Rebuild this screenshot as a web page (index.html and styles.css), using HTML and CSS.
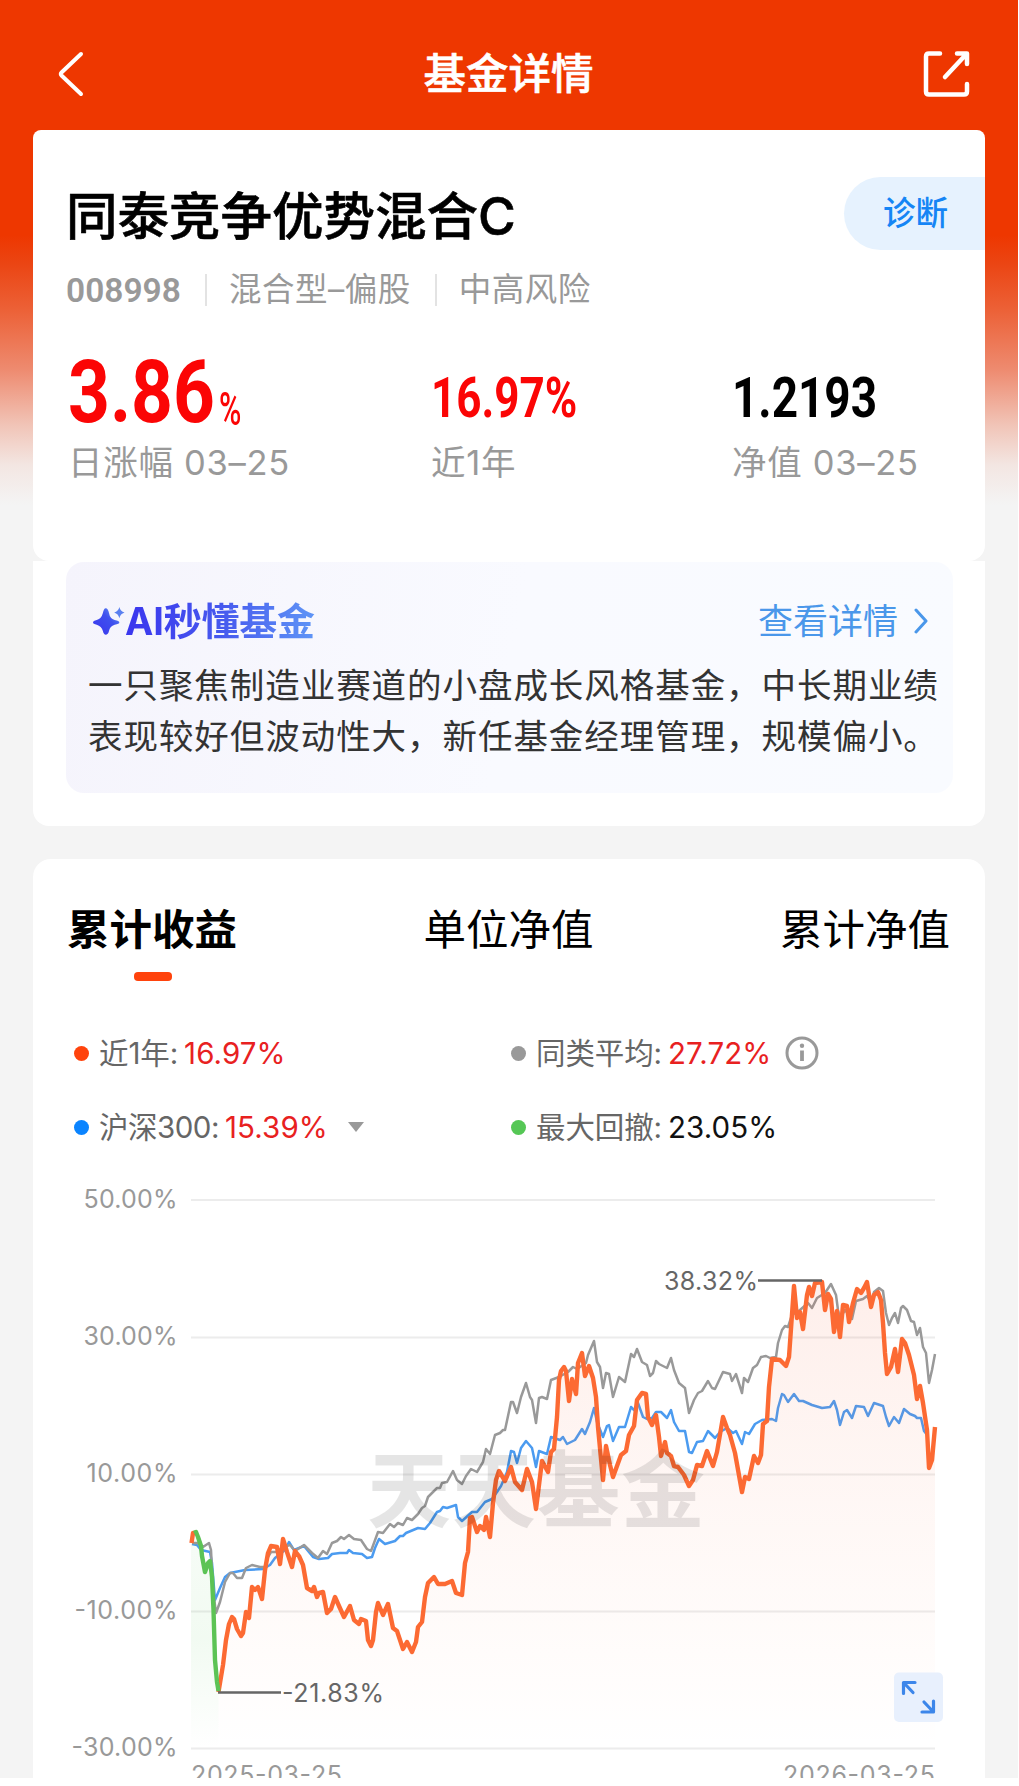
FILE: index.html
```
<!DOCTYPE html>
<html lang="zh-CN">
<head>
    <meta charset="UTF-8">
    <meta name="viewport" content="width=device-width, initial-scale=1.0">
    <title>基金详情</title>
    <link rel="stylesheet" href="styles.css">
</head>
<body>
<div class="page">
    <header class="header">
        <svg class="icon-back" viewBox="0 0 30 48" fill="none" stroke="#fff" stroke-width="4" stroke-linecap="round" stroke-linejoin="round">
            <path d="M25 4 5.500 22.500Q4 24 5.500 25.500L25 44"/>
        </svg>
        <h1>基金详情</h1>
        <svg class="icon-share" viewBox="0 0 48 48" fill="none" stroke="#fff" stroke-width="4.500" stroke-linecap="round" stroke-linejoin="round">
            <path d="M17 3.500H6Q3 3.500 3 6.500V41.500Q3 44.500 6 44.500H41Q44 44.500 44 41.500V34M34 3.500H44V14M43 4.500 22 27"/>
        </svg>
    </header>

    <section class="card fund">
        <div class="fund-head">
            <h2>同泰竞争优势混合C</h2>
            <a class="diagnose">诊断</a>
        </div>
        <div class="fund-meta">
            <b>008998</b>
            <span>混合型–偏股</span>
            <span>中高风险</span>
        </div>
        <div class="stats">
            <div class="stat">
                <div class="num num-big red"><span class="digits">3.86</span><span class="pct">%</span></div>
                <div class="stat-label">日涨幅 03–25</div>
            </div>
            <div class="stat">
                <div class="num red"><span class="digits">16.97%</span></div>
                <div class="stat-label">近1年</div>
            </div>
            <div class="stat">
                <div class="num num-nav"><span class="digits">1.2193</span></div>
                <div class="stat-label">净值 03–25</div>
            </div>
        </div>
    </section>

    <section class="card ai">
        <div class="ai-box">
            <div class="ai-head">
                <svg class="icon-star" viewBox="0 0 34 34">
                    <defs>
                        <linearGradient id="star" x1="0" y1="1" x2="1" y2="0">
                            <stop offset="0" stop-color="#3a35ee"/>
                            <stop offset="0.600" stop-color="#3f50ee"/>
                            <stop offset="1" stop-color="#6aa2f5"/>
                        </linearGradient>
                    </defs>
                    <path fill="url(#star)" d="M13.500 3Q16 3 17 8Q18 14 23 15.500Q28 16.500 28 18Q28 19.500 23 20.500Q18 22 17 27Q16 31 13.500 31Q11.500 31 10.500 27Q9 22 4 20.500Q0 19.500 0 18Q0 16.500 4 15.500Q9 14 10.500 8Q11.500 3 13.500 3Z"/>
                    <path fill="#5a80f0" d="M28 1.500Q29 6 33.500 7.500Q29 9 28 13.500Q27 9 22.500 7.500Q27 6 28 1.500Z"/>
                </svg>
                <h3>AI秒懂基金</h3>
                <a class="more">查看详情
                    <svg class="icon-more" viewBox="0 0 16 26" fill="none" stroke="#4a97ea" stroke-width="3" stroke-linecap="round" stroke-linejoin="round"><path d="M3 2 13 13 3 24"/></svg>
                </a>
            </div>
            <p>一只聚焦制造业赛道的小盘成长风格基金，中长期业绩<br>表现较好但波动性大，新任基金经理管理，规模偏小。</p>
        </div>
    </section>

    <section class="card trend">
        <nav class="tabs">
            <a class="tab active">累计收益</a>
            <a class="tab">单位净值</a>
            <a class="tab">累计净值</a>
        </nav>
        <div class="legend">
            <div class="legend-item"><i class="dot orange"></i><span>近1年:</span><em>16.97%</em></div>
            <div class="legend-item"><i class="dot gray"></i><span>同类平均:</span><em>27.72%</em>
                <svg class="icon-info" viewBox="0 0 34 34" fill="none" stroke="#999"><circle cx="17" cy="17" r="15" stroke-width="3"/><path d="M17 14.500V25" stroke-width="3.800"/><circle cx="17" cy="9.800" r="2.200" fill="#999" stroke="none"/></svg>
            </div>
            <div class="legend-item"><i class="dot blue"></i><span class="index-name">沪深300:</span><em>15.39%</em><i class="caret"></i></div>
            <div class="legend-item"><i class="dot green"></i><span>最大回撤:</span><em class="black">23.05%</em></div>
        </div>

        <svg class="chart" viewBox="33 1178 952 600">
            <defs>
                <linearGradient id="fillOrange" gradientUnits="userSpaceOnUse" x1="0" y1="1280" x2="0" y2="1748">
                    <stop offset="0" stop-color="#f25a30" stop-opacity="0.100"/>
                    <stop offset="0.500" stop-color="#f96a40" stop-opacity="0.050"/>
                    <stop offset="1" stop-color="#ff6a33" stop-opacity="0"/>
                </linearGradient>
                <linearGradient id="fillGreen" gradientUnits="userSpaceOnUse" x1="0" y1="1532" x2="0" y2="1748">
                    <stop offset="0" stop-color="#5bc65b" stop-opacity="0.050"/>
                    <stop offset="0.500" stop-color="#5bc65b" stop-opacity="0.080"/>
                    <stop offset="1" stop-color="#5bc65b" stop-opacity="0"/>
                </linearGradient>
            </defs>

            <!-- grid -->
            <path class="grid" d="M191 1200H935M191 1337.500H935M191 1474.500H935M191 1611.500H935M191 1748.500H935"/>
            <g class="axis" text-anchor="end">
                <text x="177.500" y="1207.500" textLength="94">50.00%</text>
                <text x="177.500" y="1344.500" textLength="94">30.00%</text>
                <text x="177.500" y="1481.500" textLength="91">10.00%</text>
                <text x="177.500" y="1618.500" textLength="103">-10.00%</text>
                <text x="177.500" y="1755.500" textLength="106">-30.00%</text>
            </g>
            <g class="axis">
                <text x="191" y="1783.500" textLength="151">2025-03-25</text>
                <text x="783" y="1783.500" textLength="152">2026-03-25</text>
            </g>

            <!-- 沪深300 -->
            <polyline class="line line-blue" points="192,1544 197,1545 201,1550 210,1552 212,1563 215,1600 220,1588 225,1577 230,1573 245,1570 263,1569 270,1565 275,1558 285,1550 289,1542 294,1550 304,1546 313,1557 319,1559 328,1558 332,1554 340,1553 347,1553 349,1550 353,1553 362,1554 367,1558 372,1557 375,1548 379,1539 385,1544 395,1541 400,1536 403,1536 406,1533 418,1528 425,1529 430,1523 437,1512 440,1511 443,1507 447,1508 456,1505 458,1517 462,1521 472,1512 477,1512 485,1502 492,1499 497,1492 501,1486 507,1472 511,1451 514,1452 517,1463 521,1448 526,1441 532,1448 536,1467 539,1451 547,1454 551,1437 560,1440 563,1437 567,1444 575,1440 582,1429 585,1434 590,1422 594,1408 597,1422 603,1437 607,1426 609,1425 613,1441 619,1427 625,1427 631,1407 634,1410 638,1403 643,1417 647,1419 652,1418 656,1412 661,1412 667,1418 671,1410 674,1422 679,1431 685,1431 689,1452 692,1453 697,1442 703,1441 708,1431 715,1438 720,1432 727,1428 733,1433 736,1431 742,1444 745,1432 749,1434 755,1424 762,1420 772,1419 776,1421 778,1408 782,1394 784,1395 788,1402 794,1394 799,1401 803,1401 812,1405 822,1408 830,1407 834,1401 837,1410 840,1425 844,1412 847,1410 852,1418 856,1406 864,1407 868,1416 874,1403 883,1406 886,1417 889,1426 894,1417 899,1423 904,1409 910,1414 915,1416 917,1418 921,1418 924,1431 928,1436"/>
            <!-- 同类平均 -->
            <polyline class="line line-gray" points="192,1543 198,1543 203,1547 209,1543 211,1550 213,1590 216,1613 220,1602 225,1582 230,1573 233,1573 237,1578 242,1578 246,1568 252,1565 260,1567 265,1567 268,1557 271,1552 277,1552 283,1547 290,1545 295,1551 304,1545 312,1553 318,1558 323,1551 327,1554 332,1543 337,1541 341,1537 344,1539 349,1535 354,1539 361,1540 367,1549 371,1551 374,1543 378,1532 383,1533 390,1524 394,1527 398,1523 403,1525 407,1518 412,1520 418,1514 422,1508 425,1506 428,1497 437,1488 440,1488 442,1483 447,1482 453,1471 457,1480 462,1484 466,1476 471,1469 477,1472 483,1462 486,1449 490,1454 495,1435 500,1433 503,1430 505,1430 511,1402 513,1402 517,1413 521,1397 526,1383 530,1397 532,1400 536,1423 539,1398 542,1397 547,1399 551,1380 559,1377 568,1372 573,1367 577,1369 586,1363 588,1355 594,1341 597,1362 600,1367 603,1388 606,1373 609,1374 613,1397 619,1377 625,1382 631,1354 634,1357 637,1349 642,1362 647,1365 650,1376 653,1373 656,1361 659,1364 667,1368 671,1358 674,1370 679,1383 685,1388 689,1413 694,1400 698,1393 702,1391 708,1381 712,1388 715,1389 723,1372 730,1374 732,1381 736,1374 742,1393 744,1378 748,1382 753,1368 757,1365 761,1357 766,1356 770,1358 776,1357 778,1343 782,1330 785,1326 788,1327 792,1315 800,1310 808,1303 812,1308 817,1298 825,1293 831,1284 836,1295 838,1310 840,1318 845,1310 852,1319 856,1301 863,1299 867,1296 871,1302 874,1292 879,1288 883,1291 886,1313 889,1325 892,1318 895,1313 898,1323 901,1308 903,1306 907,1310 911,1321 914,1322 917,1335 920,1328 923,1347 926,1353 929,1383 932,1370 935,1354"/>

            <!-- 本基金 -->
            <path fill="url(#fillGreen)" d="M191 1541 195 1532 201 1546 205 1572 210 1561 213.500 1610 215 1660 218.500 1691V1748H191Z"/>
            <polygon fill="url(#fillOrange)" points="218.500,1748 218.500,1692 223,1665 226,1640 229,1624 232,1617 234,1619 237,1629 241,1636 243,1633 246,1612 249,1618 252,1587 255,1590 258,1587 262,1599 265,1570 268,1553 271,1546 277,1547 280,1564 283,1539 287,1552 292,1567 295,1551 299,1556 303,1565 307,1588 312,1591 314,1587 317,1597 319,1593 323,1592 327,1613 331,1609 335,1597 339,1606 344,1617 350,1606 354,1620 359,1624 361,1619 366,1621 368,1640 371,1646 373,1640 376,1612 378,1603 383,1615 388,1604 393,1628 397,1631 403,1649 407,1642 412,1652 416,1642 418,1627 422,1622 425,1597 428,1583 434,1577 438,1584 445,1584 452,1581 456,1593 462,1595 465,1563 468,1552 470,1518 472,1517 477,1532 480,1526 484,1530 486,1517 490,1537 493,1503 496,1480 499,1471 505,1481 511,1467 515,1482 522,1490 527,1469 532,1482 536,1509 542,1461 548,1472 551,1452 554,1449 557,1417 559,1380 561,1371 564,1367 566,1371 569,1401 572,1379 576,1394 578,1363 582,1353 585,1376 589,1366 593,1378 596,1397 598,1427 603,1480 606,1446 610,1465 613,1477 621,1455 626,1451 629,1435 634,1426 637,1400 642,1393 646,1394 648,1417 652,1425 656,1415 659,1437 661,1456 665,1442 667,1453 671,1456 674,1466 678,1467 684,1475 689,1486 693,1480 697,1465 702,1466 707,1451 713,1466 717,1452 723,1417 727,1428 730,1435 735,1453 742,1492 745,1477 749,1479 754,1456 758,1463 761,1455 763,1424 767,1421 769,1387 772,1359 780,1360 786,1366 789,1357 794,1286 797,1318 800,1312 803,1329 807,1295 809,1287 812,1296 815,1283 822,1282 825,1310 828,1294 831,1299 834,1332 837,1311 840,1337 843,1305 847,1306 849,1322 853,1303 857,1289 861,1293 864,1288 867,1282 871,1307 874,1295 878,1292 881,1300 883,1323 885,1353 887,1374 891,1367 895,1349 898,1372 902,1339 905,1343 909,1355 914,1375 917,1399 920,1386 923,1403 927,1430 929,1468 932,1460 935,1427 935,1748"/>
            <polyline class="line line-orange" points="191.500,1543 193,1533 195,1533"/>
            <polyline class="line line-orange" points="218.500,1692 223,1665 226,1640 229,1624 232,1617 234,1619 237,1629 241,1636 243,1633 246,1612 249,1618 252,1587 255,1590 258,1587 262,1599 265,1570 268,1553 271,1546 277,1547 280,1564 283,1539 287,1552 292,1567 295,1551 299,1556 303,1565 307,1588 312,1591 314,1587 317,1597 319,1593 323,1592 327,1613 331,1609 335,1597 339,1606 344,1617 350,1606 354,1620 359,1624 361,1619 366,1621 368,1640 371,1646 373,1640 376,1612 378,1603 383,1615 388,1604 393,1628 397,1631 403,1649 407,1642 412,1652 416,1642 418,1627 422,1622 425,1597 428,1583 434,1577 438,1584 445,1584 452,1581 456,1593 462,1595 465,1563 468,1552 470,1518 472,1517 477,1532 480,1526 484,1530 486,1517 490,1537 493,1503 496,1480 499,1471 505,1481 511,1467 515,1482 522,1490 527,1469 532,1482 536,1509 542,1461 548,1472 551,1452 554,1449 557,1417 559,1380 561,1371 564,1367 566,1371 569,1401 572,1379 576,1394 578,1363 582,1353 585,1376 589,1366 593,1378 596,1397 598,1427 603,1480 606,1446 610,1465 613,1477 621,1455 626,1451 629,1435 634,1426 637,1400 642,1393 646,1394 648,1417 652,1425 656,1415 659,1437 661,1456 665,1442 667,1453 671,1456 674,1466 678,1467 684,1475 689,1486 693,1480 697,1465 702,1466 707,1451 713,1466 717,1452 723,1417 727,1428 730,1435 735,1453 742,1492 745,1477 749,1479 754,1456 758,1463 761,1455 763,1424 767,1421 769,1387 772,1359 780,1360 786,1366 789,1357 794,1286 797,1318 800,1312 803,1329 807,1295 809,1287 812,1296 815,1283 822,1282 825,1310 828,1294 831,1299 834,1332 837,1311 840,1337 843,1305 847,1306 849,1322 853,1303 857,1289 861,1293 864,1288 867,1282 871,1307 874,1295 878,1292 881,1300 883,1323 885,1353 887,1374 891,1367 895,1349 898,1372 902,1339 905,1343 909,1355 914,1375 917,1399 920,1386 923,1403 927,1430 929,1468 932,1460 935,1427"/>
            <polyline class="line line-green" points="194,1533 196,1532 198,1537 201,1546 202,1556 205,1572 208,1563 210,1561 212,1577 213.500,1610 215,1660 217,1682 218.500,1691"/>

            <text class="watermark" x="367" y="1521" textLength="338">天天基金</text>

            <!-- max / min -->
            <path class="mark" d="M758 1280.500H822M218 1692.500H281"/>
            <text class="mark-text" x="664" y="1290" textLength="94">38.32%</text>
            <text class="mark-text" x="282" y="1702" textLength="102">-21.83%</text>

            <!-- fullscreen -->
            <rect x="894" y="1672.500" width="49" height="49.500" rx="5" fill="#e8f0fd"/>
            <path class="expand" d="M915 1682.500H903.500V1693.500M904 1683 913 1692.500M922 1712H933.500V1701M933 1711.500 924 1702"/>
        </svg>
    </section>
</div>
</body>
</html>
```
FILE: styles.css
```
*{
    box-sizing: border-box;
}

body{
    margin: 0;
    background-color: #fff;
    font-family: Inter, "Noto Sans CJK SC", sans-serif;
    color: #000;
}

h1, h2, h3, p{
    margin: 0;
}

.page{
    width: 1018px;
    height: 1778px;
    overflow: hidden;
    background: linear-gradient(#ee3700 0, #ee3700 235px, #eb4412 262px, #ec6137 310px, #ee8b70 370px, #f1c4b7 425px, #f3e6e2 465px, #f4f4f4 505px);
}

.header{
    height: 130px;
    padding: 18px 47px 0 56px;
    display: flex;
    justify-content: space-between;
    align-items: center;
}

.header h1{
    color: #fff;
    font-size: 42.5px;
    font-weight: 500;
    line-height: 60px;
    -webkit-text-stroke: 0.6px #fff;
    padding-left: 8px;
}

.icon-back{
    width: 30px;
    height: 48px;
}

.icon-share{
    width: 48px;
    height: 48px;
}

.card{
    width: 952px;
    margin-left: 33px;
    background-color: #fff;
}

/* fund summary */
.fund{
    height: 431px;
    padding: 47px 0 0 33px;
    border-radius: 8px 8px 16px 16px;
}

.fund-head{
    display: flex;
    justify-content: space-between;
    align-items: center;
    height: 73px;
}

.fund-head h2{
    padding-bottom: 3px;
    font-size: 51.5px;
    font-weight: 500;
    -webkit-text-stroke: 0.6px #000;
}

.diagnose{
    width: 141px;
    line-height: 73px;
    padding-left: 39px;
    border-radius: 37px 0 0 37px;
    background-color: #e6f2fe;
    color: #1585f5;
    font-size: 32.5px;
    font-weight: 500;
}

.fund-meta{
    display: flex;
    align-items: center;
    height: 40px;
    margin-top: 20px;
    color: #999;
    font-size: 32.5px;
}

.fund-meta b{
    width: 115px;
    font-family: Roboto, sans-serif;
    font-size: 33.5px;
    font-weight: 600;
}

.fund-meta span{
    margin-left: 24px;
    padding-left: 22px;
    line-height: 32px;
    letter-spacing: 0.5px;
    border-left: 2px solid #e3e3e3;
}

.stats{
    display: grid;
    grid-template-columns: 363px 301px 1fr;
    margin-top: 35px;
    padding-left: 2px;
}

.num{
    display: flex;
    height: 90px;
    padding-top: 16px;
    line-height: 75px;
    font-family: Roboto, sans-serif;
    font-size: 55px;
    font-weight: 700;
}

.num .digits{
    transform: scaleX(0.8);
    transform-origin: left;
}

.num-nav .digits{
    transform: scaleX(0.835);
}

.num-big{
    padding-top: 2px;
    line-height: 90px;
    font-size: 88px;
}

.num-big .digits{
    width: 151px;
    transform: scaleX(0.83);
}

.num .pct{
    padding-top: 17px;
    font-size: 46px;
    font-weight: 500;
    transform: scaleX(0.66);
    transform-origin: left;
}

.red{
    color: #fb0505;
}

.stat-label{
    margin-top: 6px;
    line-height: 44px;
    color: #999;
    font-size: 34.5px;
    letter-spacing: 0.7px;
}

/* AI summary */
.ai{
    height: 265px;
    padding: 1px 32px 0 33px;
    border-radius: 0 0 16px 16px;
}

.ai-box{
    height: 231px;
    padding: 33px 12px 0 23px;
    border-radius: 18px;
    background: linear-gradient(100deg, #f5f4fc, #f9faff 50%, #f9fbff);
}

.ai-head{
    display: flex;
    align-items: center;
    height: 52px;
    padding-left: 4px;
}

.icon-star{
    width: 32px;
    height: 33px;
}

.ai-head h3{
    font-size: 38px;
    font-weight: 700;
    line-height: 52px;
    letter-spacing: -0.2px;
    background: linear-gradient(90deg, #3a35ee, #4658ee 50%, #5f95f6);
    -webkit-background-clip: text;
    background-clip: text;
    color: transparent;
}

.more{
    display: flex;
    align-items: center;
    gap: 15px;
    height: 52px;
    margin-left: auto;
    padding-right: 12px;
    line-height: 48px;
    color: #4a97ea;
    font-size: 35px;
}

.icon-more{
    width: 16px;
    height: 26px;
}

.ai-box p{
    margin-top: 13px;
    color: #333;
    font-size: 34.5px;
    letter-spacing: 0.95px;
    line-height: 51px;
    white-space: nowrap;
    margin-left: -1px;
}

/* chart card */
.trend{
    height: 930px;
    margin-top: 33px;
    border-radius: 18px 18px 0 0;
}

.tabs{
    display: flex;
    justify-content: space-between;
    height: 150px;
    padding: 41px 35px 0 34px;
}

.tab{
    display: flex;
    flex-direction: column;
    align-items: center;
    font-size: 42.5px;
    line-height: 60px;
}

.active{
    font-weight: 700;
}

.active::after{
    content: "";
    width: 38px;
    height: 9px;
    margin: 12px 0 0 2px;
    border-radius: 4px;
    background-color: #ff430c;
}

.legend{
    display: grid;
    grid-template-columns: 437px 1fr;
    grid-auto-rows: 74px;
    height: 169px;
    padding: 7px 0 0 41px;
}

.legend-item{
    display: flex;
    align-items: center;
    color: #666;
    font-size: 29.5px;
    white-space: nowrap;
}

.legend span{
    padding-bottom: 4px;
    letter-spacing: -0.1px;
}

.legend .index-name{
    letter-spacing: -0.5px;
}

.legend em{
    margin-left: 6px;
    font-style: normal;
    color: #e8211f;
    letter-spacing: 0.1px;
}

.legend .black{
    color: #111;
}

.dot{
    width: 15px;
    height: 15px;
    margin-right: 10px;
    border-radius: 50%;
}

.orange{ background-color: #ff430c; }
.gray{ background-color: #999; }
.blue{ background-color: #0a84ff; }
.green{ background-color: #55c755; }

.icon-info{
    width: 34px;
    height: 34px;
    margin-left: 14px;
}

.caret{
    margin-left: 20px;
    border: 8.5px solid transparent;
    border-top: 10px solid #999;
    border-bottom: 0;
}

.chart{
    display: block;
    width: 952px;
    height: 600px;
}

.grid{
    stroke: #ececec;
    stroke-width: 2;
}

.axis text{
    fill: #999;
    font-size: 25px;
}

.line{
    fill: none;
    stroke-width: 2.5;
    stroke-linejoin: round;
}

.line-blue{ stroke: #4b9bf0; }
.line-gray{ stroke: #999; }
.line-orange{ stroke: #fc6a33; stroke-width: 4.4; }
.line-green{ stroke: #5cc355; stroke-width: 4.4; }

.watermark{
    fill: #000;
    fill-opacity: 0.1;
    font-size: 84px;
    font-weight: 700;
}

.mark{
    stroke: #666;
    stroke-width: 2.4;
}

.mark-text{
    fill: #666;
    font-size: 25px;
}

.expand{
    fill: none;
    stroke: #3c86ea;
    stroke-width: 3.2;
    stroke-linecap: round;
    stroke-linejoin: round;
}
```
